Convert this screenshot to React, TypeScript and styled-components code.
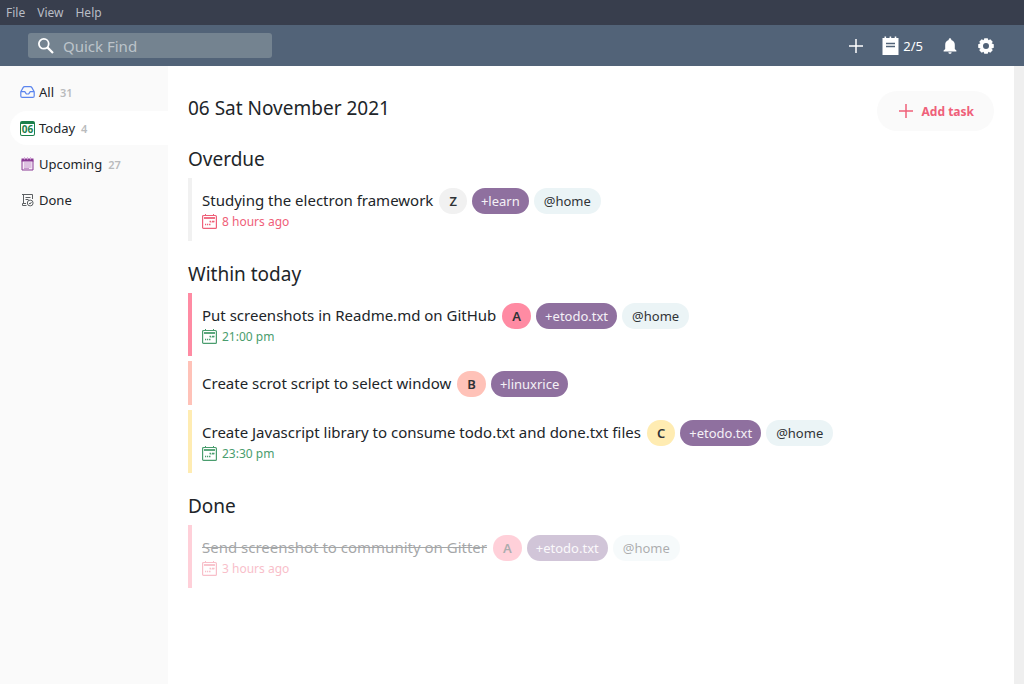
import React from "react";
import styled, { createGlobalStyle } from "styled-components";

const GlobalStyle = createGlobalStyle`
  *, *::before, *::after { box-sizing: border-box; }
  body {
    margin: 0;
    background: #fff;
    color: #212529;
    font-family: "Noto Sans", "Open Sans", sans-serif;
    font-size: 13px;
  }
  button, input { font: inherit; }
  h1, h2, ul, p { margin: 0; padding: 0; }
  ul { list-style: none; }
`;

const Page = styled.div`
  display: flex;
  flex-direction: column;
  min-height: 100vh;
`;

const MenuBar = styled.nav`
  display: flex;
  height: 25px;
  padding: 0 6px;
  gap: 12px;
  background: #383e4d;
`;

const MenuItem = styled.button`
  border: 0;
  padding: 0;
  background: none;
  color: #b9bdc5;
  font-size: 12px;
  line-height: 25px;
`;

const Toolbar = styled.header`
  display: flex;
  align-items: center;
  justify-content: space-between;
  height: 41px;
  padding: 0 29px 0 28px;
  background: #526378;
`;

const SearchBox = styled.label`
  display: flex;
  align-items: center;
  gap: 8px;
  width: 244px;
  height: 25px;
  padding: 0 9px;
  border-radius: 3px;
  background: #748390;
`;

const SearchInput = styled.input`
  flex: 1;
  min-width: 0;
  height: 25px;
  border: 0;
  padding: 0;
  outline: 0;
  background: none;
  color: #fff;
  font-size: 15px;
  &::placeholder { color: #bcc3ca; opacity: 1; }
`;

const ToolGroup = styled.div`
  display: flex;
  align-items: center;
  gap: 18px;
`;

const ToolButton = styled.button`
  display: flex;
  align-items: center;
  gap: 4px;
  border: 0;
  padding: 0;
  background: none;
  color: #fff;
  font-size: 13px;
`;

const Body = styled.div`
  display: flex;
  flex: 1;
`;

const Sidebar = styled.aside`
  width: 168px;
  flex-shrink: 0;
  padding: 9px 0 0 10px;
  background: #fafafa;
`;

const NavList = styled.ul`
  display: flex;
  flex-direction: column;
  gap: 2px;
`;

const NavLink = styled.a<{ $active?: boolean }>`
  display: flex;
  align-items: center;
  gap: 4px;
  height: 34px;
  padding-left: 10px;
  border-radius: 17px 0 0 17px;
  background: ${(p) => (p.$active ? "#fff" : "transparent")};
  color: #212529;
  text-decoration: none;
`;

const NavCount = styled.span`
  margin-left: 2px;
  color: #b9bbbd;
  font-size: 11px;
  font-weight: 600;
`;

const Main = styled.main`
  flex: 1;
  min-width: 0;
  padding: 25px 20px 40px;
`;

const ScrollTrack = styled.div`
  width: 10px;
  background: #efefef;
`;

const TitleRow = styled.div`
  display: flex;
  align-items: flex-start;
  justify-content: space-between;
`;

const Title = styled.h1`
  padding-top: 4px;
  font-size: 19px;
  font-weight: 400;
  line-height: 26px;
`;

const AddButton = styled.button`
  display: flex;
  align-items: center;
  gap: 8px;
  height: 40px;
  padding: 0 20px 0 21px;
  border: 0;
  border-radius: 20px;
  background: #fafafa;
  color: #ef6079;
  font-size: 12px;
  font-weight: 700;
`;

const Sections = styled.div`
  display: flex;
  flex-direction: column;
  gap: 21px;
  padding-top: 16px;
`;

const Heading = styled.h2`
  margin-bottom: 7px;
  font-size: 19px;
  font-weight: 400;
  line-height: 24px;
`;

const TaskList = styled.ul`
  display: flex;
  flex-direction: column;
  gap: 5px;
`;

const Task = styled.li<{ $bar: string; $done?: boolean }>`
  padding: 10px 0 8px 10px;
  border-left: 4px solid ${(p) => p.$bar};
  opacity: ${(p) => (p.$done ? 0.4 : 1)};
`;

const TaskRow = styled.div`
  display: flex;
  align-items: flex-start;
  gap: 5px;
  height: 26px;
`;

const TaskText = styled.span<{ $done?: boolean }>`
  margin-right: 1px;
  font-size: 15px;
  line-height: 24px;
  text-decoration: ${(p) => (p.$done ? "line-through" : "none")};
`;

const Pill = styled.span<{ $bg: string; $fg?: string; $bold?: boolean; $tight?: boolean }>`
  height: 26px;
  padding: 0 ${(p) => (p.$tight ? 9 : 10)}px;
  border-radius: 13px;
  background: ${(p) => p.$bg};
  color: ${(p) => p.$fg || "#2f3336"};
  font-size: 13px;
  font-weight: ${(p) => (p.$bold ? 600 : 400)};
  line-height: 26px;
`;

const Due = styled.p<{ $color: string }>`
  display: flex;
  align-items: center;
  gap: 5px;
  height: 15px;
  margin-bottom: 4px;
  color: ${(p) => p.$color};
  font-size: 12px;
  line-height: 15px;
`;

const SearchIcon = () => (
  <svg width="18" height="18" viewBox="0 0 18 18" fill="none" stroke="#fff" strokeWidth="1.8">
    <circle cx="6.800" cy="6.800" r="4.900" />
    <path d="M10.400 10.400 16 16" strokeWidth="2.200" />
  </svg>
);

const PlusIcon = () => (
  <svg width="16" height="16" viewBox="0 0 16 16" fill="none" stroke="currentColor" strokeWidth="1.500">
    <path d="M8 1v14M1 8h14" />
  </svg>
);

const NotepadIcon = () => (
  <svg width="17" height="20" viewBox="0 0 17 20">
    <path fill="#fff" d="M.5 2h2V.6h1.600V2h3.500V.6h1.600V2h3.500V.6h1.600V2h2.200v17H.5z" />
    <path d="M4 7.500h9M4 10.500h9" stroke="#526378" strokeWidth="1.300" />
  </svg>
);

const BellIcon = () => (
  <svg width="18" height="18" viewBox="0 0 18 18" fill="#fff">
    <path d="M9 1.200c.8 0 1.300.6 1.300 1.300v.5c2.200.6 3.500 2.400 3.500 4.700V12l1.600 1.600v.8H2.600v-.8L4.200 12V7.700C4.200 5.400 5.500 3.600 7.700 3v-.5C7.700 1.800 8.200 1.200 9 1.200zM7.400 15.200h3.200c0 .9-.7 1.600-1.600 1.600s-1.600-.7-1.600-1.600z" />
  </svg>
);

const GearIcon = () => (
  <svg width="18" height="18" viewBox="0 0 18 18">
    <circle cx="9" cy="9" r="4.700" fill="none" stroke="#fff" strokeWidth="3.400" />
    <g fill="#fff">
      {[0, 45, 90, 135, 180, 225, 270, 315].map((a) => (
        <path key={a} d="M6.600 3.200 7.300 1.200h3.400l.7 2z" transform={`rotate(${a} 9 9)`} />
      ))}
    </g>
  </svg>
);

const InboxIcon = () => (
  <svg width="15" height="14" viewBox="0 0 15 14" fill="none" stroke="#5b85ee" strokeWidth="1.200" strokeLinejoin="round">
    <path d="M4.800 1.600h5.400c.8 0 1.300.3 1.700 1l2 3.600c.2.300.3.700.3 1.100v3.600c0 .9-.6 1.500-1.500 1.500H2.300c-.9 0-1.500-.6-1.500-1.500V7.300c0-.4.100-.8.300-1.100l2-3.600c.4-.7.900-1 1.700-1z" />
    <path d="M.9 6.600h3.900l1.300 2c.2.300.5.400.8.400h1.200c.3 0 .6-.1.800-.4l1.300-2h3.900" />
  </svg>
);

const TodayBadge = styled.span`
  display: flex;
  justify-content: center;
  width: 15px;
  height: 15px;
  border: 1px solid #1b7f4b;
  border-top-width: 3px;
  border-radius: 2px;
  color: #1b7f4b;
  font-size: 10px;
  font-weight: 700;
  line-height: 11px;
`;

const NavIcon = styled.span`
  display: flex;
  justify-content: center;
  width: 15px;
`;

const UpcomingIcon = () => (
  <svg width="13" height="14" viewBox="0 0 13 14">
    <path d="M1 3.500h11v9.500H1z" fill="#f6ebf7" stroke="#8a3a94" />
    <path d="M.5 1.500h12v3H.5z" fill="#8a3a94" />
    <path d="M3.500 0v2.500M6.500 0v2.500M9.500 0v2.500" stroke="#d9b0de" />
    <path d="M3 6h7.500M3 8h7.500M3 10h7.500M3 11.500h5" stroke="#c596cb" />
  </svg>
);

const DoneIcon = () => (
  <svg width="13" height="14" viewBox="0 0 13 14" fill="none" stroke="#5c6063">
    <path d="M5.500 12.500h-4v-2h3.500M2.500 10.500v-9M1 1.500h10.500V6" />
    <path d="M4.500 4.500h5M4.500 6.500h3" />
    <circle cx="9.200" cy="10" r="2.900" />
    <path d="m8 10.100 1 .9 1.500-2" />
  </svg>
);

const CalendarIcon = () => (
  <svg width="15" height="15" viewBox="0 0 15 15" fill="none" stroke="currentColor">
    <rect x=".6" y="1.500" width="13.800" height="12.900" rx="1" strokeWidth="1.200" />
    <path d="M3.500 0v2M11.500 0v2" />
    <path d="M2 4h11" strokeWidth="1.800" />
    <path d="M7.500 7.500H9M10 7.500h2.500M3 10.500h1.200M5 10.500h1.200M7 10.500h1.500" strokeWidth="1.500" />
    <path d="M9 7.500v1M11 7.500v1" />
  </svg>
);

type TaskData = {
  text: string;
  priority: string;
  project: string;
  context?: string;
  due?: string;
  dueColor?: string;
};

const priorityColors: Record<string, string> = {
  A: "#ff8ba3",
  B: "#ffc2b8",
  C: "#ffecb2",
  Z: "#f1f1f1",
};

const RED = "#ef6079";
const GREEN = "#4a9d6e";

const sections: { title: string; done?: boolean; tasks: TaskData[] }[] = [
  {
    title: "Overdue",
    tasks: [
      { text: "Studying the electron framework", priority: "Z", project: "+learn", context: "@home", due: "8 hours ago", dueColor: RED },
    ],
  },
  {
    title: "Within today",
    tasks: [
      { text: "Put screenshots in Readme.md on GitHub", priority: "A", project: "+etodo.txt", context: "@home", due: "21:00 pm", dueColor: GREEN },
      { text: "Create scrot script to select window", priority: "B", project: "+linuxrice" },
      { text: "Create Javascript library to consume todo.txt and done.txt files", priority: "C", project: "+etodo.txt", context: "@home", due: "23:30 pm", dueColor: GREEN },
    ],
  },
  {
    title: "Done",
    done: true,
    tasks: [
      { text: "Send screenshot to community on Gitter", priority: "A", project: "+etodo.txt", context: "@home", due: "3 hours ago", dueColor: RED },
    ],
  },
];

const navItems = [
  { label: "All", count: 31, icon: <InboxIcon /> },
  { label: "Today", count: 4, icon: <TodayBadge>06</TodayBadge>, active: true },
  { label: "Upcoming", count: 27, icon: <UpcomingIcon /> },
  { label: "Done", icon: <DoneIcon /> },
];

export default function App() {
  return (
    <Page>
      <GlobalStyle />
      <MenuBar>
        <MenuItem>File</MenuItem>
        <MenuItem>View</MenuItem>
        <MenuItem>Help</MenuItem>
      </MenuBar>
      <Toolbar>
        <SearchBox>
          <SearchIcon />
          <SearchInput type="text" placeholder="Quick Find" aria-label="Quick Find" />
        </SearchBox>
        <ToolGroup>
          <ToolButton aria-label="New task"><PlusIcon /></ToolButton>
          <ToolButton><NotepadIcon />2/5</ToolButton>
          <ToolButton aria-label="Notifications"><BellIcon /></ToolButton>
          <ToolButton aria-label="Settings"><GearIcon /></ToolButton>
        </ToolGroup>
      </Toolbar>
      <Body>
        <Sidebar>
          <NavList>
            {navItems.map((item) => (
              <li key={item.label}>
                <NavLink href="#" $active={item.active}>
                  <NavIcon>{item.icon}</NavIcon>
                  {item.label}
                  {item.count && <NavCount>{item.count}</NavCount>}
                </NavLink>
              </li>
            ))}
          </NavList>
        </Sidebar>
        <Main>
          <TitleRow>
            <Title>06 Sat November 2021</Title>
            <AddButton><PlusIcon />Add task</AddButton>
          </TitleRow>
          <Sections>
            {sections.map((section) => (
              <section key={section.title}>
                <Heading>{section.title}</Heading>
                <TaskList>
                  {section.tasks.map((task) => (
                    <Task key={task.text} $bar={priorityColors[task.priority]} $done={section.done}>
                      <TaskRow>
                        <TaskText $done={section.done}>{task.text}</TaskText>
                        <Pill $bg={priorityColors[task.priority]} $bold>{task.priority}</Pill>
                        <Pill $bg="#8f709f" $fg="#f4f0f6" $tight>{task.project}</Pill>
                        {task.context && <Pill $bg="#ebf4f6">{task.context}</Pill>}
                      </TaskRow>
                      {task.due && (
                        <Due $color={task.dueColor || RED}>
                          <CalendarIcon />
                          {task.due}
                        </Due>
                      )}
                    </Task>
                  ))}
                </TaskList>
              </section>
            ))}
          </Sections>
        </Main>
        <ScrollTrack />
      </Body>
    </Page>
  );
}
